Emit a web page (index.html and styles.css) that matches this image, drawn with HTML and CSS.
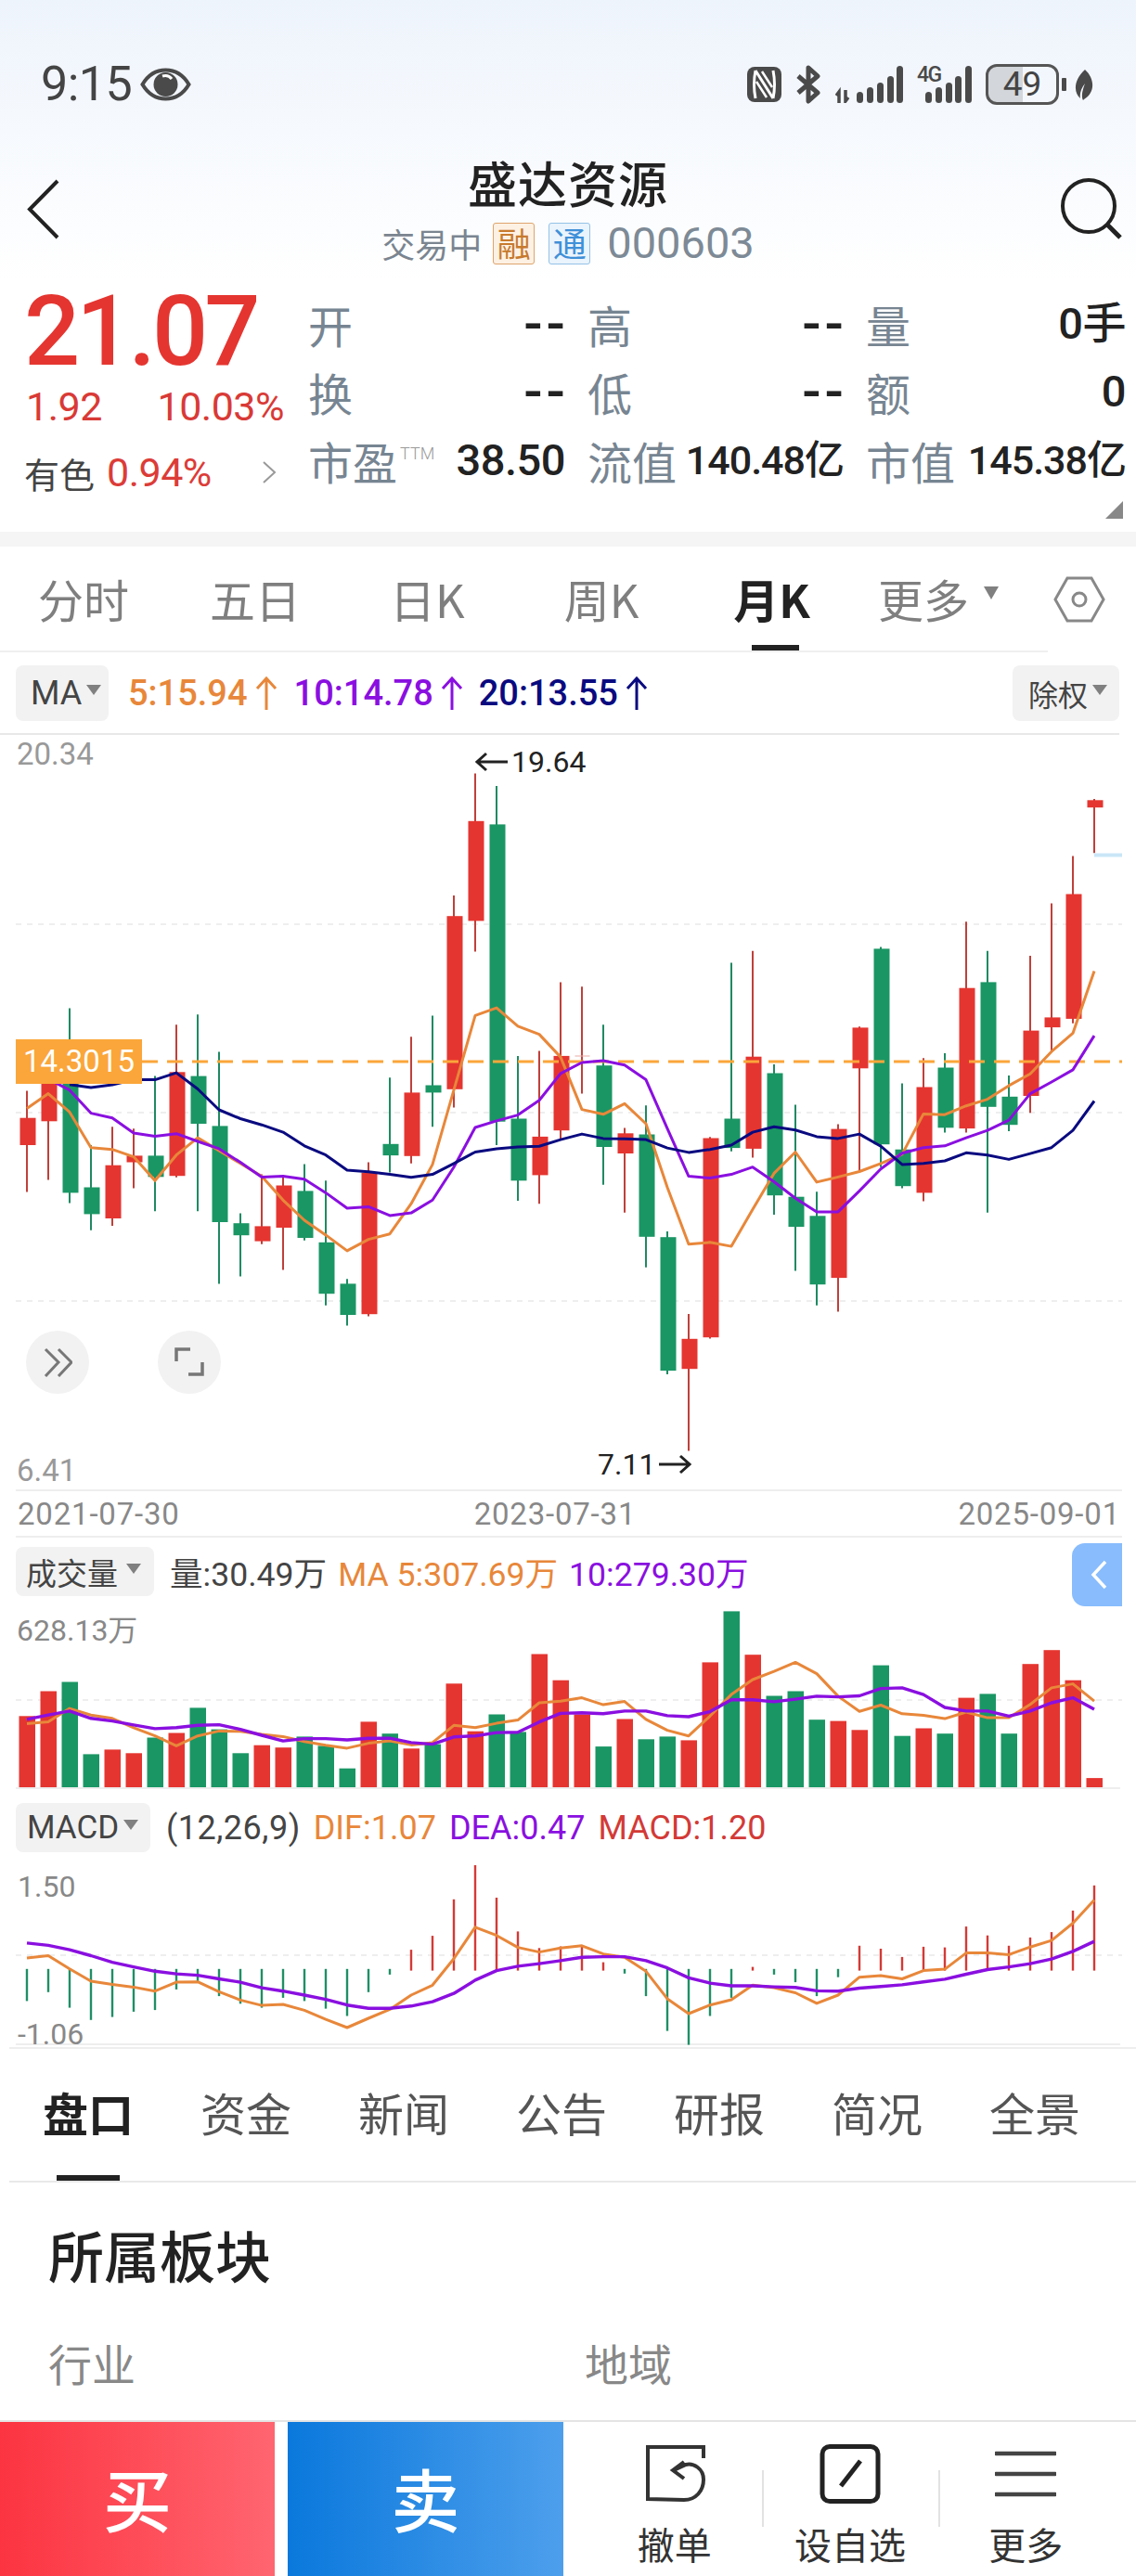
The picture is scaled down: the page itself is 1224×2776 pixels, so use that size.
FILE: index.html
```html
<!DOCTYPE html>
<html lang="zh-CN">
<head>
<meta charset="utf-8">
<title>盛达资源</title>
<link rel="stylesheet" href="styles.css">
</head>
<body>
<div class="page">
  <header class="top">
    <div class="status">
      <div class="status-left">
        <span class="clock">9:15</span>
        <svg class="i-eye" viewBox="0 0 55 36"><path d="M2.5 18C9 7 18 2.5 27.500 2.500S46 7 52.500 18C46 29 37 33.500 27.500 33.500S9 29 2.500 18Z" fill="none" stroke="#4a4a4a" stroke-width="4"/><circle cx="27.500" cy="18" r="13" fill="#4a4a4a"/><path d="M24 9a9 9 0 0 1 10 3" fill="none" stroke="#fff" stroke-width="3"/></svg>
      </div>
      <div class="status-right">
        <svg class="i-nfc" viewBox="0 0 37 38"><rect width="37" height="38" rx="8" fill="#4a4a4a"/><path d="M9 4Q6 19 9 34M9 4 28 34M28 4Q31 19 28 34" fill="none" stroke="#fff" stroke-width="3"/><path d="M16 5 27 22M10 16 21 33" fill="none" stroke="#fff" stroke-width="2.500"/></svg>
        <svg class="i-bt" viewBox="0 0 28 42"><path d="M3 12 24 30 14 39V3L24 12 3 30" fill="none" stroke="#4a4a4a" stroke-width="5" stroke-linejoin="round"/></svg>
        <svg class="i-sig1" viewBox="0 0 73 40"><path d="M4 40V28L1 32M11 26V38L14 34" fill="none" stroke="#4a4a4a" stroke-width="3.500"/><g fill="#4a4a4a"><rect x="23" y="28" width="7" height="12" rx="3.500"/><rect x="34" y="23" width="7" height="17" rx="3.500"/><rect x="45" y="18" width="7" height="22" rx="3.500"/><rect x="56" y="11" width="7" height="29" rx="3.500"/><rect x="66" y="0" width="7" height="40" rx="3.500"/></g></svg>
        <div class="sig2">
          <span class="net">4G</span>
          <svg class="i-sig2" viewBox="0 0 59 40"><g fill="#4a4a4a"><rect x="9" y="28" width="7" height="12" rx="3.500"/><rect x="20" y="23" width="7" height="17" rx="3.500"/><rect x="31" y="18" width="7" height="22" rx="3.500"/><rect x="41" y="11" width="7" height="29" rx="3.500"/><rect x="52" y="0" width="7" height="40" rx="3.500"/></g></svg>
        </div>
        <div class="batt-wrap">
          <span class="batt">49</span><span class="nub"></span>
        </div>
        <svg class="i-leaf" viewBox="0 0 21 33"><path d="M12 0C23 10 23 25 11 32L10 33C7 28 11 18 12 15 8 20 6 26 7 31 0 25-1 12 12 0Z" fill="#4a4a4a"/></svg>
      </div>
    </div>
    <nav class="nav">
      <svg class="i-back" viewBox="0 0 36 65"><path d="M33 2 3 32.500 33 63" fill="none" stroke="#222" stroke-width="4"/></svg>
      <div class="nav-mid">
        <h1 class="name">盛达资源</h1>
        <div class="sub">
          <span class="sub-state">交易中</span>
          <span class="tag tag-rong">融</span>
          <span class="tag tag-tong">通</span>
          <span class="code">000603</span>
        </div>
      </div>
      <svg class="i-search" viewBox="0 0 68 68"><circle cx="32" cy="31" r="28" fill="none" stroke="#222" stroke-width="4"/><path d="M52 51 66 65" stroke="#222" stroke-width="5" fill="none"/></svg>
    </nav>
    <section class="quote">
      <div class="q-left">
        <div class="price">21.07</div>
        <div class="chg"><span>1.92</span><span>10.03%</span></div>
        <div class="sector">
          <span class="sector-name">有色</span>
          <span class="sector-val">0.94%</span>
          <svg class="i-more" viewBox="0 0 16 24"><path d="M2 1 14 12 2 23" fill="none" stroke="#999" stroke-width="2"/></svg>
        </div>
      </div>
      <div class="q-grid">
        <div class="cell"><span class="lb">开</span><b class="vl vl-dash">--</b></div>
        <div class="cell"><span class="lb">高</span><b class="vl vl-dash">--</b></div>
        <div class="cell"><span class="lb">量</span><b class="vl">0手</b></div>
        <div class="cell"><span class="lb">换</span><b class="vl vl-dash">--</b></div>
        <div class="cell"><span class="lb">低</span><b class="vl vl-dash">--</b></div>
        <div class="cell"><span class="lb">额</span><b class="vl">0</b></div>
        <div class="cell"><span class="lb">市盈<sup class="ttm">TTM</sup></span><b class="vl">38.50</b></div>
        <div class="cell"><span class="lb">流值</span><b class="vl vl-sm">140.48亿</b></div>
        <div class="cell"><span class="lb">市值</span><b class="vl vl-sm">145.38亿</b></div>
      </div>
      <span class="corner"></span>
    </section>
  </header>
  <div class="strip"></div>

  <div class="periods">
    <div class="period-tabs">
      <span class="pt">分时</span>
      <span class="pt">五日</span>
      <span class="pt">日K</span>
      <span class="pt">周K</span>
      <span class="pt pt-on">月K</span>
      <span class="pt">更多<i class="tri tri-more"></i></span>
    </div>
    <svg class="i-hex" viewBox="0 0 56 50"><path d="M2 25 15 2H41L54 25 41 48H15Z" fill="none" stroke="#888" stroke-width="3"/><circle cx="28" cy="25" r="7" fill="none" stroke="#888" stroke-width="3"/></svg>
  </div>

  <div class="ind-row">
    <span class="chip chip-ma">MA<i class="tri"></i></span>
    <span class="ma ma-5">5:15.94<svg class="up" viewBox="0 0 24 36"><path d="M12 36V2M2 13 12 2 22 13" fill="none" stroke="currentColor" stroke-width="3"/></svg></span>
    <span class="ma ma-10">10:14.78<svg class="up" viewBox="0 0 24 36"><path d="M12 36V2M2 13 12 2 22 13" fill="none" stroke="currentColor" stroke-width="3"/></svg></span>
    <span class="ma ma-20">20:13.55<svg class="up" viewBox="0 0 24 36"><path d="M12 36V2M2 13 12 2 22 13" fill="none" stroke="currentColor" stroke-width="3"/></svg></span>
    <span class="chip chip-fq">除权<i class="tri"></i></span>
  </div>

  <div class="main-chart">
    <svg id="kline" class="plot plot-k" viewBox="0 792 1224 813"></svg>
    <span class="axis ax-high">20.34</span>
    <div class="anno anno-high"><svg class="arrow" viewBox="0 0 35 22"><path d="M35 11H3M12 2 2 11 12 20" fill="none" stroke="#222" stroke-width="3"/></svg><span>19.64</span></div>
    <span class="price-tag">14.3015</span>
    <span class="round-btn rb-a"><svg viewBox="0 0 32 32"><path d="M3 2 17 16 3 31M17 2 31 16 17 31" fill="none" stroke="#777" stroke-width="3"/></svg></span>
    <span class="round-btn rb-b"><svg viewBox="0 0 32 32"><path d="M2 15V2H17M30 16V29H15" fill="none" stroke="#777" stroke-width="3.500"/></svg></span>
    <span class="axis ax-low">6.41</span>
    <div class="anno anno-low"><span>7.11</span><svg class="arrow" viewBox="0 0 35 22"><path d="M0 11H32M23 2 33 11 23 20" fill="none" stroke="#222" stroke-width="3"/></svg></div>
  </div>
  <div class="dates"><span>2021-07-30</span><span class="date-mid">2023-07-31</span><span class="date-end">2025-09-01</span></div>

  <section class="vol">
    <div class="sub-head sub-head-vol">
      <span class="chip chip-vol">成交量<i class="tri"></i></span>
      <span class="sh-txt c-dark sh-first">量:30.49万</span>
      <span class="sh-txt c-orange">MA 5:307.69万</span>
      <span class="sh-txt c-purple">10:279.30万</span>
    </div>
    <svg id="volume" class="plot plot-v" viewBox="0 1720 1224 210"></svg>
    <span class="axis ax-vol">628.13万</span>
    <span class="side-tab"><svg viewBox="0 0 18 32"><path d="M16 2 3 16 16 30" fill="none" stroke="#fff" stroke-width="3.500"/></svg></span>
  </section>

  <section class="macd">
    <div class="sub-head">
      <span class="chip chip-macd">MACD<i class="tri"></i></span>
      <span class="sh-txt c-dark sh-first2">(12,26,9)</span>
      <span class="sh-txt c-orange">DIF:1.07</span>
      <span class="sh-txt c-purple">DEA:0.47</span>
      <span class="sh-txt c-red">MACD:1.20</span>
    </div>
    <svg id="macd" class="plot plot-m" viewBox="0 1996 1224 210"></svg>
    <span class="axis ax-m1">1.50</span>
    <span class="axis ax-m2">-1.06</span>
  </section>

  <div class="info-tabs">
    <span class="it it-on">盘口</span>
    <span class="it">资金</span>
    <span class="it">新闻</span>
    <span class="it">公告</span>
    <span class="it">研报</span>
    <span class="it">简况</span>
    <span class="it">全景</span>
  </div>

  <section class="board">
    <h2 class="board-title">所属板块</h2>
    <div class="board-cols"><span>行业</span><span>地域</span></div>
  </section>

  <footer class="bar">
    <button class="trade buy">买</button>
    <button class="trade sell">卖</button>
    <div class="acts">
      <div class="act">
        <svg class="act-ic" viewBox="0 0 66 64"><path d="M64 15V3H4V59L43 60C56 60 64 50 64 38 64 26 53 20 45 22L32 28M43 19 31 28 43 37" fill="none" stroke="#333" stroke-width="4"/></svg>
        <span>撤单</span>
      </div>
      <div class="act">
        <svg class="act-ic" viewBox="0 0 66 64"><rect x="3" y="2.500" width="60" height="59" rx="8" fill="none" stroke="#222" stroke-width="5"/><path d="M44 18 23 45" stroke="#222" stroke-width="5" fill="none"/></svg>
        <span>设自选</span>
      </div>
      <div class="act">
        <svg class="act-ic" viewBox="0 0 66 64"><path d="M1 10H65M1 32H65M1 54H65" stroke="#444" stroke-width="4.500" fill="none" stroke-linecap="round"/></svg>
        <span>更多</span>
      </div>
    </div>
  </footer>
</div>
<script src="chart.js"></script>
</body>
</html>
```
FILE: styles.css
```css
* { box-sizing: border-box; }
html, body { margin: 0; padding: 0; background: #fff; }
body { font-family: Roboto, "Noto Sans CJK SC", sans-serif; color: #222; }
.page { width: 1224px; height: 2776px; overflow: hidden; position: relative; background: #fff; }
h1, h2 { margin: 0; font-weight: 500; }
i { font-style: normal; }

/* header */
.top { height: 573px; background: linear-gradient(180deg, #eef4fc 0, #fff 300px); }
.status { height: 160px; padding: 22px 46px 0 44px; display: flex; justify-content: space-between; align-items: center; }
.status-left { display: flex; align-items: center; gap: 9px; }
.clock { font-size: 52px; line-height: 60px; color: #444; letter-spacing: -.5px; }
.i-eye { width: 55px; height: 36px; }
.status-right { display: flex; align-items: center; gap: 15px; }
.i-nfc { width: 37px; height: 38px; }
.i-bt { width: 28px; height: 42px; }
.i-sig1 { width: 73px; height: 40px; }
.sig2 { width: 59px; height: 40px; position: relative; }
.i-sig2 { width: 59px; height: 40px; display: block; }
.net { position: absolute; left: 0; top: -1px; font-size: 23px; line-height: 22px; font-weight: 500; color: #4a4a4a; letter-spacing: -1.500px; }
.batt-wrap { display: flex; align-items: center; gap: 3px; }
.batt { width: 79px; height: 44px; border: 3px solid #555; border-radius: 12px; background: linear-gradient(90deg, #d3d6da 51%, transparent 51%); font-size: 37px; line-height: 38px; text-align: center; color: #444; }
.nub { width: 5px; height: 14px; background: #4a4a4a; border-radius: 1px; }
.i-leaf { width: 21px; height: 33px; margin-left: -7px; }

.nav { height: 130px; padding: 5px 15px 0; display: grid; grid-template-columns: 1fr auto 1fr; align-items: start; }
.i-back { width: 36px; height: 65px; margin: 28px 0 0 14px; }
.i-search { width: 68px; height: 68px; justify-self: end; margin-top: 26px; }
.nav-mid { display: flex; flex-direction: column; align-items: center; gap: 8px; }
.name { font-size: 53px; line-height: 62px; color: #222; letter-spacing: 1px; font-weight: 500; font-family: "Noto Sans CJK SC", sans-serif; }
.sub { height: 54px; display: flex; align-items: center; }
.sub-state { font-size: 36px; color: #7a8590; line-height: 54px; font-family: "Noto Sans CJK SC", sans-serif; }
.tag { width: 45px; height: 45px; border: 1.500px solid; border-radius: 3px; margin-left: 12px; font-size: 36px; line-height: 41px; text-align: center; font-family: "Noto Sans CJK SC", sans-serif; }
.tag-rong { border-color: #dfa46c; background: #fdf1e4; color: #c77a2e; }
.tag-tong { margin-left: 15px; border-color: #94c2e8; background: #eaf4fc; color: #3f90d8; }
.code { font-size: 47px; color: #7d8a96; margin-left: 18px; line-height: 54px; }

.quote { height: 283px; padding-left: 28px; display: flex; position: relative; }
.q-left { width: 304px; padding-right: 26px; }
.price { margin: 12px 0 0 -2px; height: 109px; font-size: 106px; line-height: 110px; font-weight: 500; color: #e53530; letter-spacing: -4px; white-space: nowrap; }
.chg { height: 54px; display: flex; justify-content: space-between; font-size: 43px; line-height: 54px; color: #d93a36; letter-spacing: -.5px; }
.sector { height: 62px; margin-top: 13px; display: flex; align-items: center; font-size: 43px; color: #dc3c38; letter-spacing: -.5px; }
.sector-name { color: #444; font-size: 38px; font-family: "Noto Sans CJK SC", sans-serif; margin: 0 13px 0 -2px; letter-spacing: 0; }
.i-more { width: 16px; height: 24px; margin-left: auto; margin-right: 8px; }
.q-grid { margin-top: 22px; display: grid; grid-template-columns: 277px 276px 280px; grid-auto-rows: 73.500px; column-gap: 24px; }
.cell { display: flex; justify-content: space-between; align-items: center; }
.lb { font-size: 48px; line-height: 60px; color: #778592; font-family: "Noto Sans CJK SC", sans-serif; white-space: nowrap; position: relative; }
.ttm { font-size: 18px; color: #999; font-family: Roboto, sans-serif; font-weight: 300; position: relative; top: -22px; vertical-align: baseline; margin-left: 3px; line-height: 0; }
.vl { font-weight: 500; font-size: 47px; color: #222; letter-spacing: -.5px; line-height: 60px; }
.vl-dash { font-size: 60px; letter-spacing: 4px; margin-right: -4px; }
.vl-sm { font-size: 43px; letter-spacing: -1px; }
.corner { position: absolute; right: 14px; top: 250px; width: 0; height: 0; border-left: 19px solid transparent; border-bottom: 19px solid #888; }

.strip { height: 16px; background: #f5f5f5; }

/* period tabs */
.periods { height: 114px; display: flex; }
.period-tabs { width: 1129px; height: 114px; border-bottom: 2px solid #efefef; display: flex; align-items: center; padding: 0 0 0 41px; font-size: 49px; color: #7f7f7f; font-family: "Noto Sans CJK SC", sans-serif; }
.pt { position: relative; height: 112px; line-height: 110px; white-space: nowrap; display: flex; align-items: center; }
.pt:nth-child(2) { margin-left: 87px; }
.pt:nth-child(3) { margin-left: 96px; }
.pt:nth-child(4) { margin-left: 107px; }
.pt:nth-child(5) { margin-left: 102px; }
.pt:nth-child(6) { margin-left: 73px; }
.pt-on { color: #222; font-weight: 700; }
.pt-on::after { content: ""; position: absolute; left: 20px; bottom: 0; width: 51px; height: 6px; background: #222; }
.i-hex { width: 56px; height: 50px; margin: 32px 0 0 6px; }
.tri { display: inline-block; width: 0; height: 0; border-left: 8px solid transparent; border-right: 8px solid transparent; border-top: 11px solid #808080; margin-left: 5px; position: relative; top: -3px; }
.tri-more { margin-left: 16px; border-top-width: 14px; top: -6px; }

/* indicator row */
.ind-row { height: 89px; border-bottom: 2px solid #e8e8e8; margin: 0 18px 0 0; padding-left: 17px; display: flex; align-items: center; font-weight: 500; }
.chip { height: 60px; background: #f2f2f2; border-radius: 8px; display: inline-flex; align-items: center; color: #444; font-weight: 400; font-size: 36px; white-space: nowrap; }
.chip-ma { width: 100px; padding-left: 16px; }
.chip-fq { width: 115px; padding-left: 17px; margin-left: auto; font-size: 32px; font-family: "Noto Sans CJK SC", sans-serif; }
.ma { font-size: 38px; display: inline-flex; align-items: center; white-space: nowrap; }
.ma-5 { color: #e8873a; margin-left: 21px; }
.ma-10 { color: #8a0fe0; margin-left: 18px; }
.ma-20 { color: #0a0a80; margin-left: 17px; }
.up { width: 24px; height: 36px; margin-left: 8px; }

/* main chart */
.main-chart { position: relative; height: 813px; }
.plot { display: block; width: 1224px; }
.plot-k { height: 813px; }
.plot-v, .plot-m { height: 210px; }
.axis { position: absolute; font-size: 33px; line-height: 40px; color: #999; white-space: nowrap; }
.ax-high { left: 18px; top: 1px; }
.ax-low { left: 18px; top: 773px; }
.anno { position: absolute; display: flex; align-items: center; gap: 4px; font-size: 32px; line-height: 40px; color: #222; }
.anno-high { left: 512px; top: 9px; }
.anno-low { left: 644px; top: 766px; }
.arrow { width: 35px; height: 22px; }
.price-tag { position: absolute; left: 17px; top: 328px; width: 136px; height: 48px; background: #fba63a; color: #fff; font-size: 33px; line-height: 48px; text-align: center; }
.round-btn { position: absolute; top: 642px; width: 68px; height: 68px; border-radius: 50%; background: #f2f2f2; display: flex; align-items: center; justify-content: center; }
.round-btn svg { width: 32px; height: 32px; }
.rb-a { left: 28px; }
.rb-b { left: 170px; }

.dates { height: 52px; margin: 0 15px 0 17px; padding: 0 2px; border-top: 2px solid #eee; border-bottom: 2px solid #eee; display: flex; align-items: center; font-size: 33px; color: #888; letter-spacing: .8px; }
.date-mid { margin-left: 317px; }
.date-end { margin-left: auto; }

/* sub panels */
.vol, .macd { position: relative; }
.vol { height: 278px; padding-top: 10px; }
.macd { height: 271px; padding-top: 8px; }
.sub-head { height: 53px; padding-left: 17px; display: flex; align-items: center; font-size: 36px; white-space: nowrap; }
.sub-head-vol { font-size: 35.600px; }
.sub-head-vol .sh-txt { margin-left: 12px; }
.sub-head-vol .sh-first { margin-left: 17px; }
.chip-vol { height: 53px; width: 149px; padding-left: 11px; font-size: 33px; font-family: "Noto Sans CJK SC", sans-serif; }
.chip-macd { height: 53px; width: 145px; padding-left: 12px; font-size: 35px; }
.chip-vol .tri { margin-left: 9px; }
.sh-txt { margin-left: 14px; }
.sub-head .sh-first2 { margin-left: 17px; letter-spacing: .5px; }
.c-dark { color: #444; }
.c-orange { color: #e8873a; }
.c-purple { color: #8a0fe0; }
.c-red { color: #d33a36; }
.ax-vol { left: 18px; top: 80px; color: #888; font-size: 32px; }
.ax-m1 { left: 19px; top: 78px; color: #888; font-size: 32px; }
.ax-m2 { left: 19px; top: 237px; color: #888; font-size: 32px; }
.side-tab { position: absolute; top: 6px; right: 15px; width: 54px; height: 68px; background: #88bcfd; border-radius: 14px 0 0 14px; display: flex; align-items: center; justify-content: center; }
.side-tab svg { width: 18px; height: 32px; margin-left: 3px; }

/* info tabs */
.info-tabs { height: 146px; margin-left: 10px; border-top: 2px solid #eee; border-bottom: 2px solid #e9e9e9; display: flex; padding-bottom: 6px; font-size: 49px; color: #555; font-family: "Noto Sans CJK SC", sans-serif; }
.it { width: 170px; text-align: center; line-height: 136px; position: relative; }
.it-on { color: #222; font-weight: 700; }
.it-on::after { content: ""; position: absolute; left: 51px; bottom: -6px; width: 68px; height: 6px; background: #222; }

.board { height: 256px; padding: 42px 0 0 52px; font-family: "Noto Sans CJK SC", sans-serif; }
.board-title { font-size: 60px; line-height: 70px; color: #222; font-weight: 500; }
.board-cols { margin-top: 52px; display: grid; grid-template-columns: 578px 1fr; font-size: 47px; line-height: 60px; color: #888; }

/* bottom bar */
.bar { height: 168px; border-top: 2px solid #e4e4e4; display: flex; font-family: "Noto Sans CJK SC", sans-serif; }
.trade { width: 297px; border: 0; padding: 0 0 6px; color: #fff; font-size: 74px; font-weight: 500; font-family: inherit; }
.buy { width: 296px; background: linear-gradient(90deg, #fc3441, #ff6570); }
.sell { margin-left: 14px; background: linear-gradient(90deg, #0a78dc, #4d9fec); }
.acts { flex: 1; padding: 0 24px 0 25px; display: flex; }
.act { flex: 1; position: relative; display: flex; flex-direction: column; align-items: center; padding-top: 24px; }
.act + .act::before { content: ""; position: absolute; left: 0; top: 52px; width: 2px; height: 61px; background: #e2e2e2; }
.act-ic { width: 66px; height: 64px; }
.act span { margin-top: 18px; font-size: 40px; line-height: 50px; color: #333; }
```
FILE: chart.js
```js
// Monthly K-line data: x slots are 23px apart, y values are kept in pixel units of each plot.
var NS = 'http://www.w3.org/2000/svg';
var RED = '#e53530', GREEN = '#1a9664', ORANGE = '#e8873a', PURPLE = '#8a0fe0', NAVY = '#0a0a80';
function X(i) { return 29 + 23 * i; }
function add(svg, name, attrs) {
  var el = document.createElementNS(NS, name);
  for (var k in attrs) el.setAttribute(k, attrs[k]);
  svg.appendChild(el);
  return el;
}
function line(svg, pts, color, width) {
  add(svg, 'polyline', { points: pts.join(' '), fill: 'none', stroke: color, 'stroke-width': width, 'stroke-linejoin': 'round' });
}
function dash(svg, y, x1, x2) {
  add(svg, 'path', { d: 'M' + x1 + ' ' + y + 'H' + x2, stroke: '#eeeeee', 'stroke-width': 2, 'stroke-dasharray': '6 6', fill: 'none' });
}

/* ---------- K line ---------- */
var K = function (z) { return 1060 + z / 2.529; };
// color, wick top, body top, body bottom, wick bottom
var candles = [
  ['r',292,366,440,568],['r',240,260,375,535],['g',67,260,570,598],['g',440,555,628,672],['r',390,495,640,660],
  ['r',395,469,487,558],['g',252,469,527,620],['r',112,241,524,528],['g',84,252,382,620],['g',186,388,650,818],
  ['g',626,653,686,798],['r',520,661,702,710],['r',522,550,665,780],['g',492,565,693,700],['g',537,705,845,877],
  ['g',805,818,903,932],['r',487,515,901,907],['g',256,437,468,515],['r',145,297,470,490],['g',87,277,297,390],
  ['r',-240,-184,288,338],['r',-573,-443,-171,-87],['g',-539,-434,376,440],['g',197,368,537,592],['r',183,417,522,600],
  ['r',-4,197,400,425],['r',8,196,198,300],['g',112,223,445,548],['r',393,408,463,624],['g',332,411,690,773],
  ['g',675,691,1055,1065],['r',900,968,1050,1273],['r',418,421,964,967],['g',-57,368,448,457],['r',-89,199,450,474],
  ['g',220,244,577,630],['g',330,581,663,783],['g',567,633,820,877],['r',383,396,802,894],['r',117,120,231,510],
  ['g',-100,-95,438,500],['g',272,452,552,558],['r',203,282,570,593],['g',190,229,393,406],['r',-169,12,395,406],
  ['g',-89,-4,336,624],['g',250,308,385,402],['r',-76,128,306,352],['r',-219,92,119,185],['r',-348,-244,96,108],
  ['r',-503,-500,-480,-356]
];
var ma5 = [340,300,350,447,452,472,537,467,420,455,490,525,590,645,685,728,697,682,600,493,290,87,66,116,138,200,
  343,356,327,382,555,710,705,716,615,517,459,541,527,512,490,465,355,357,333,315,278,246,185,135,-34];
var ma10 = [240,260,290,353,366,407,416,409,430,450,487,527,525,533,570,612,608,632,625,590,500,392,374,358,318,245,
  215,210,222,262,395,525,530,520,500,540,585,622,622,565,505,462,447,442,420,400,372,300,268,235,142];
var ma20 = [null,null,275,283,276,262,262,243,287,344,368,385,405,442,467,508,513,520,528,520,490,459,450,445,443,425,
  410,422,423,425,448,460,452,440,405,390,399,417,422,410,443,493,490,483,461,467,479,463,447,400,320];

function series(data, toY) {
  var out = [];
  data.forEach(function (v, i) { if (v !== null) out.push(X(i) + ',' + toY(v).toFixed(1)); });
  return out;
}

var k = document.getElementById('kline');
[996, 1199, 1402].forEach(function (y) { dash(k, y, 17, 1209); });
candles.forEach(function (c, i) {
  var x = X(i), col = c[0] === 'r' ? RED : GREEN, wick = c[0] === 'r' ? '#bf403a' : '#1f8a62';
  add(k, 'path', { d: 'M' + x + ' ' + K(c[1]).toFixed(1) + 'V' + K(c[4]).toFixed(1), stroke: wick, 'stroke-width': 2 });
  var flat = i === 26;
  add(k, 'rect', { x: x - 7.5, y: K(c[2]).toFixed(1), width: flat ? 16 : 17, height: Math.max(1, (c[3] - c[2]) / 2.529).toFixed(1), fill: flat ? '#e9a9a6' : col });
});
add(k, 'path', { d: 'M1179 921.500H1209', stroke: '#c9e6f7', 'stroke-width': 4 });
add(k, 'path', { d: 'M153 1144H1209', stroke: '#fba63a', 'stroke-width': 3, 'stroke-dasharray': '17 10', fill: 'none' });
line(k, series(ma5, K), ORANGE, 3);
line(k, series(ma10, K), PURPLE, 3);
line(k, series(ma20, K), NAVY, 3);

/* ---------- volume ---------- */
var V = function (z) { return 1660 + z / 2.8; };
var vols = ['r530','r455','g427','g645','r631','r642','g595','r581','g505','g570','g642','r618','r625','g592','g620','g688','r547','g583','r628','g615',
  'r432','r576','g525','g578','r343','r422','r525','g622','r539','g600','g592','r603','r368','g214','r345','g469','g455','g541','r545','r572',
  'g377','g590','r567','g583','r475','g463','g583','r373','r331','r422','r717'];
var volMa5 = [553,547,507,527,537,565,590,620,590,575,576,585,592,607,618,627,612,605,617,610,558,565,552,542,490,485,
  475,496,486,540,573,590,530,465,420,395,368,402,470,516,497,523,528,538,518,535,535,495,445,433,485];
var volMa10 = [540,527,515,537,545,557,568,565,558,556,570,588,605,598,598,602,597,597,610,615,593,590,580,579,548,522,
  520,523,515,515,529,532,517,481,481,487,479,470,472,469,447,445,465,504,515,515,530,515,490,475,510];
var v = document.getElementById('volume');
dash(v, 1832, 17, 1209);
add(v, 'path', { d: 'M17 1927H1207', stroke: '#eeeeee', 'stroke-width': 2 });
vols.forEach(function (b, i) {
  var top = V(+b.slice(1));
  add(v, 'rect', { x: X(i) - 8.5, y: top.toFixed(1), width: 17.5, height: (1926 - top).toFixed(1), fill: b[0] === 'r' ? RED : GREEN });
});
line(v, series(volMa5, V), ORANGE, 3);
line(v, series(volMa10, V), PURPLE, 3.4);

/* ---------- MACD ---------- */
var bars = ['g1390','g1363','g1410','g1447','g1438','g1422','g1417','g1355','g1330','g1375','g1398','g1410','g1380','g1390','g1413','g1435','g1363','g1310',
  'r1235','r1193','r1083','r980','r1078','r1180','r1230','r1225','r1225','r1273','g1307','g1375','g1480','g1522','g1435','g1380','r1287','g1310','g1333','g1375','g1318',
  'r1223','r1232','r1257','r1226','r1228','r1165','r1192','r1223','r1198','r1182','r1117','r1041'];
var dif = [1260,1253,1293,1330,1340,1348,1360,1333,1332,1362,1387,1403,1400,1418,1445,1470,1442,1415,1372,1342,1262,1167,1192,1228,1242,1230,
  1223,1248,1258,1300,1383,1428,1402,1386,1342,1350,1365,1397,1372,1318,1313,1323,1298,1294,1245,1245,1250,1227,1207,1155,1085];
var dea = [1215,1222,1235,1253,1273,1287,1300,1308,1312,1323,1333,1350,1360,1372,1385,1402,1412,1412,1405,1392,1367,1327,1298,1285,1277,1268,
  1258,1256,1256,1268,1290,1320,1336,1344,1344,1347,1349,1359,1360,1351,1346,1341,1332,1324,1309,1295,1287,1277,1263,1240,1210];
var m = document.getElementById('macd');
dash(m, 2107, 17, 1209);
add(m, 'path', { d: 'M17 2203H1207', stroke: '#eeeeee', 'stroke-width': 2 });
bars.forEach(function (b, i) {
  var red = b[0] === 'r', z = +b.slice(1), from = red ? 1298 : 1293;
  add(m, 'path', { d: 'M' + X(i) + ' ' + V(from).toFixed(1) + 'V' + V(z).toFixed(1), stroke: red ? '#d33a36' : '#1f8f66', 'stroke-width': 2.4 });
});
line(m, series(dif, V), ORANGE, 3);
line(m, series(dea, V), PURPLE, 3.4);
```
